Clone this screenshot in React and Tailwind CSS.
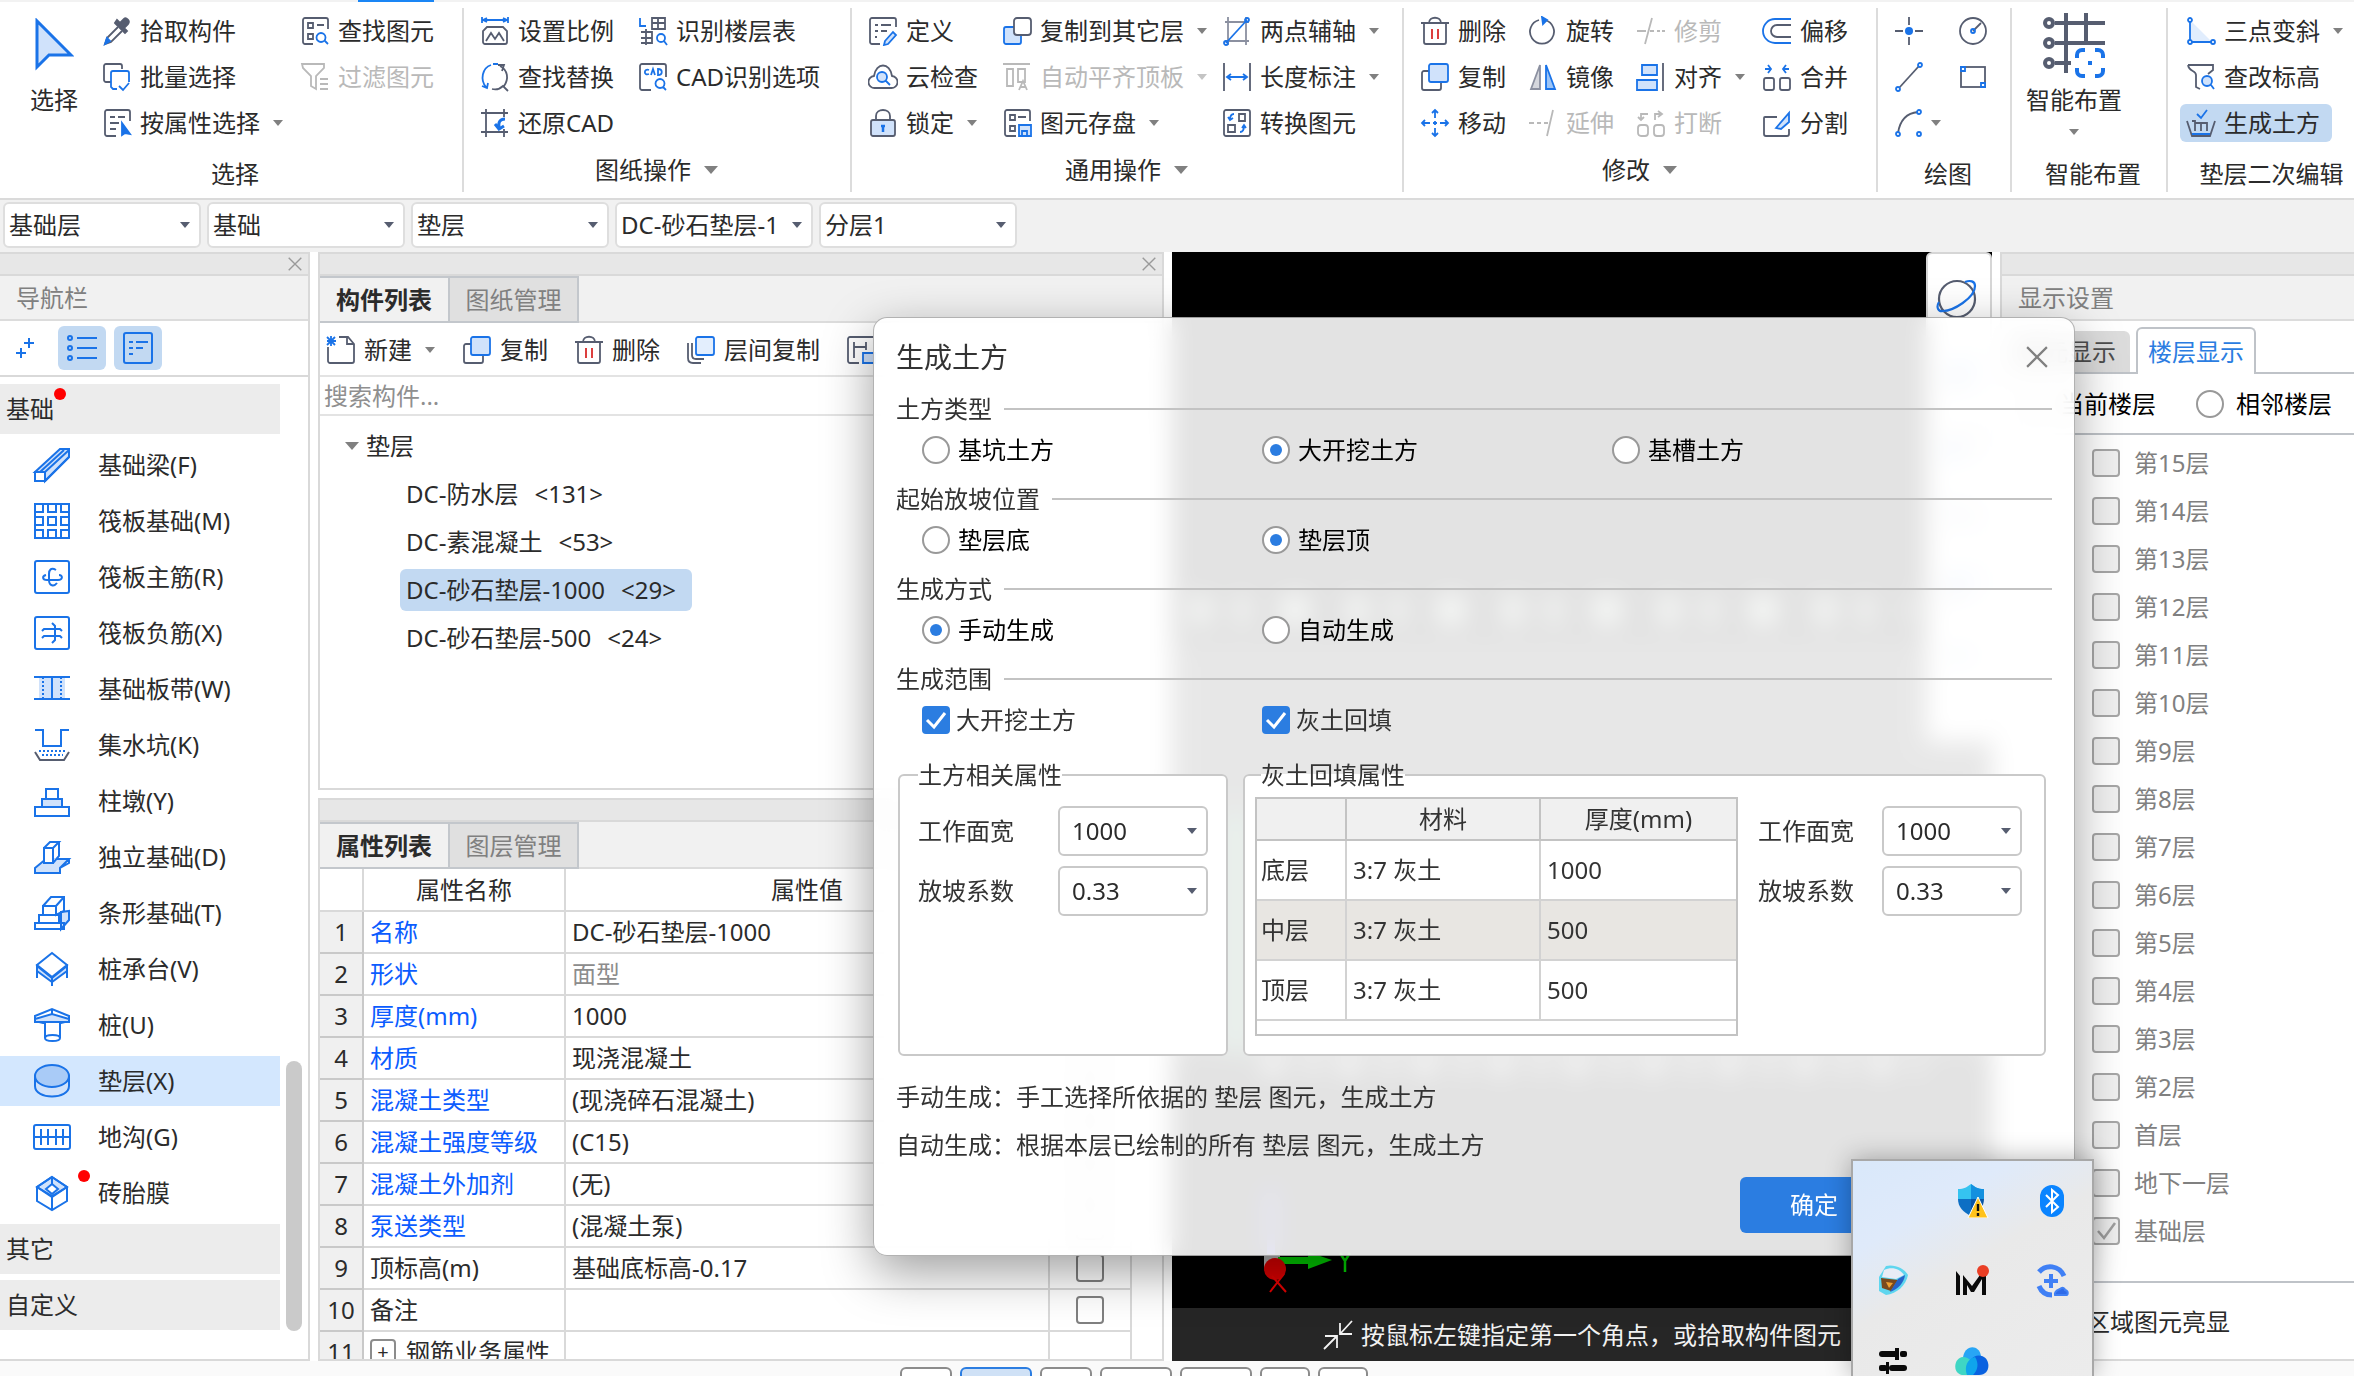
import { useState } from "react";
import clsx from "clsx";

const D = "#565d70";
const B = "#1a73e8";
const L = "#d0e2fb";
const G = "#b9b9b9";

/* ---------- ribbon icons, 30 x 30 ---------- */
const icons = {
  pick: (
    <>
      <path d="M16 11 5 22l-2 6 6-2 11-11" />
      <path d="M3 28l2-6 3 3z" fill={B} stroke={B} />
      <path d="M13 7l10 10 2-2-3-3 4-4c3-3-2-7-4-5l-4 4-3-3z" fill={D} />
    </>
  ),
  batch: (
    <>
      <path d="M9 20H4a2 2 0 0 1-2-2V4a2 2 0 0 1 2-2h14a2 2 0 0 1 2 2v3" />
      <path d="M15 27h-4l-2-2V11a2 2 0 0 1 2-2h14a2 2 0 0 1 2 2v9M17 24l4 4 6-7" stroke={B} />
    </>
  ),
  attr: (
    <>
      <path d="M14 28H5a2 2 0 0 1-2-2V4a2 2 0 0 1 2-2h21a2 2 0 0 1 2 2v9M8 9h5M16 9h7M8 15h9M8 21h6" />
      <path d="M20 15v12l3-2 5 1z" fill={B} stroke={B} />
    </>
  ),
  findEl: (
    <>
      <path d="M13 28H5a2 2 0 0 1-2-2V4a2 2 0 0 1 2-2h21a2 2 0 0 1 2 2v9M17 9h7" />
      <path d="M8 7h5v5H8zM8 18h5v5H8z" />
      <path d="M21 17a4 4 0 1 0 0 9 4 4 0 0 0 0-9zM25 25l3 3" stroke={B} />
    </>
  ),
  filter: <path d="M2 2h22v4l-8 8v13l-5-3V14L3 6zM20 17h8M20 22h8M20 27h8" stroke={G} />,
  scale: (
    <>
      <path d="M2 1v6M28 1v6M2 4h26M7 2 3 4l4 2M23 2l4 2-4 2" stroke={B} />
      <path d="M7 11h16l4 4v11a2 2 0 0 1-2 2H5a2 2 0 0 1-2-2V15zM6 25l5-8 4 6 4-6 5 8" />
    </>
  ),
  replace: (
    <>
      <path d="M11 3C2 6 0 18 6 25M2 24l5 2 1-5M13 2h5" stroke={B} />
      <path d="M20 4c8 4 9 13 4 20M18 3l6 0-2 6M12 27c4 1 8 0 11-3l5 5" />
    </>
  ),
  restore: (
    <>
      <path d="M1 5h27M1 24h27M6 1v28M24 1v8M24 21v8" />
      <path d="M25 11c-5 0-7 3-6 9M15 16l4 5 5-3" stroke={B} strokeWidth="3" />
    </>
  ),
  floors: (
    <>
      <path d="M14 2h13v11H14zM14 7h13M20 2v11M3 16h11v11H3M8 13v16M3 22h11" />
      <path d="M2 2v8h6M23 18a4 4 0 1 0 0 8 4 4 0 0 0 0-8zM26 25l3 4" stroke={B} />
    </>
  ),
  cadId: (
    <>
      <path d="M13 28H4a2 2 0 0 1-2-2V4a2 2 0 0 1 2-2h22a2 2 0 0 1 2 2v11" />
      <path d="M11 8c-5-2-6 6 0 4M13 13l2-6 2 6M20 7v6c5 0 5-6 0-6zM22 17a4 4 0 1 0 0 9 4 4 0 0 0 0-9zM25 25l3 3" stroke={B} />
    </>
  ),
  define: (
    <>
      <path d="M12 28H4a2 2 0 0 1-2-2V4a2 2 0 0 1 2-2h22a2 2 0 0 1 2 2v7M7 9h3M13 9h10M7 15h3M13 15h6M7 21h2" />
      <path d="M17 25l8-9 3 3-8 9-4 1z" stroke={B} fill={L} />
    </>
  ),
  cloud: (
    <>
      <path d="M7 26a6 6 0 0 1-1-12C8 0 22 0 24 14a6 6 0 0 1-1 12z" />
      <path d="M14 10a5 5 0 1 0 0 10 5 5 0 0 0 0-10zM18 19l4 4" stroke={B} fill={L} />
    </>
  ),
  lock: (
    <>
      <path d="M8 12V8c0-8 14-8 14 0v4" />
      <rect x="3" y="12" width="24" height="16" rx="2" fill={L} />
      <path d="M15 18v6M13 18h4" stroke={B} strokeWidth="2.5" />
    </>
  ),
  copyTo: (
    <>
      <rect x="2" y="11" width="17" height="17" rx="2" fill={L} stroke={B} />
      <rect x="12" y="2" width="17" height="17" rx="3" fill="#fff" />
    </>
  ),
  align: <path d="M1 2h27M5 7h6v17H5zM16 7h7v13h-7zM17 28l4-9 4 9M18 25h6" stroke={G} />,
  save: (
    <>
      <path d="M14 28H5a2 2 0 0 1-2-2V4a2 2 0 0 1 2-2h21a2 2 0 0 1 2 2v9M16 9h8M8 7h5v5H8zM8 18h5v5H8z" />
      <path d="M17 17h12v11H17zM20 28v-5h5v5" stroke={B} fill={L} />
    </>
  ),
  axis: (
    <>
      <path d="M3 6h24M3 25h24M6 1v28M24 1v28" stroke="#8b90a0" />
      <path d="M4 27 25 4" stroke={B} />
      <circle cx="25" cy="4" r="2" stroke={B} />
      <circle cx="4" cy="27" r="2" stroke={B} />
    </>
  ),
  dim: (
    <>
      <path d="M2 1v28M28 1v28" />
      <path d="M5 15h20M9 12l-4 3 4 3M21 12l4 3-4 3" stroke={B} />
    </>
  ),
  convert: (
    <>
      <rect x="2" y="2" width="26" height="26" rx="2" />
      <path d="M17 6h6v7h-6zM6 17h7v7H6z" />
      <path d="M12 6c-3 0-4 2-4 6M6 9l2 3 3-2M18 24c3 0 4-2 4-6M20 20l2-3 2 3" stroke={B} />
    </>
  ),
  trash: (
    <>
      <path d="M1 7h28M9 7c0-7 12-7 12 0M4 7v19a2 2 0 0 0 2 2h18a2 2 0 0 0 2-2V7" />
      <path d="M12 13v10M18 13v10" stroke="#d92b2b" />
    </>
  ),
  copy: (
    <>
      <path d="M9 9H4a2 2 0 0 0-2 2v15a2 2 0 0 0 2 2h15a2 2 0 0 0 2-2v-5" />
      <rect x="9" y="2" width="19" height="18" rx="2" fill={L} stroke={B} />
    </>
  ),
  move: (
    <path
      d="M15 10V2M12 5l3-3 3 3M15 20v8M12 25l3 3 3-3M10 15H2M5 12l-3 3 3 3M20 15h8M25 12l3 3-3 3M13 15h4M15 13v4"
      stroke={B}
    />
  ),
  rotate: (
    <>
      <path d="M17 4a12 12 0 1 1-6 0" />
      <path d="M14 1l5 3-4 4z" fill={B} stroke={B} />
    </>
  ),
  mirror: (
    <>
      <path d="M12 3v24H3z" fill="#d5d7dd" stroke="#8b90a0" />
      <path d="M18 3v24h9z" fill="#9cc4f6" stroke={B} />
    </>
  ),
  extend: <path d="M1 15h5M9 15h4M16 15h4M19 28 25 2" stroke={G} />,
  trim: <path d="M1 15h9M9 28 16 2M14 15h4M21 15h3M26 15h3" stroke={G} />,
  justify: (
    <>
      <path d="M6 3h15v10H6zM1 18h20v10H1z" stroke={B} fill={L} />
      <path d="M27 1v28" />
    </>
  ),
  breakIt: (
    <>
      <rect x="2" y="17" width="10" height="11" rx="3" stroke={G} />
      <rect x="18" y="17" width="10" height="11" rx="3" stroke={G} />
      <path d="M12 6H5v6M2 9l3 3 3-3M19 12V6h6M22 3l4 3-4 3" stroke={G} />
    </>
  ),
  offset: (
    <>
      <path d="M29 3H13a12 12 0 0 0 0 24h16" stroke={B} />
      <path d="M29 9H15a6 6 0 0 0 0 12h14" />
    </>
  ),
  merge: (
    <>
      <rect x="2" y="16" width="10" height="12" rx="2" />
      <rect x="18" y="16" width="10" height="12" rx="2" />
      <path d="M3 7h6M6 3l3 4-3 4M27 7h-6M24 3l-3 4 3 4" stroke={B} />
    </>
  ),
  split: (
    <>
      <path d="M15 9H3a1 1 0 0 0-1 1v16a2 2 0 0 0 2 2h21a2 2 0 0 0 2-2v-5" />
      <path d="M14 20 27 5v9l-8 7z" stroke={B} fill={L} />
    </>
  ),
  point: (
    <>
      <path d="M15 1v8M15 21v8M1 15h8M21 15h8" />
      <circle cx="15" cy="15" r="4" fill={B} stroke="none" />
    </>
  ),
  circle: (
    <>
      <circle cx="15" cy="15" r="13" />
      <path d="M15 15l8-8" />
      <circle cx="15" cy="15" r="2" stroke={B} />
    </>
  ),
  line: (
    <>
      <path d="M5 26 25 4" />
      <circle cx="4" cy="27" r="2" stroke={B} />
      <circle cx="26" cy="3" r="2" stroke={B} />
    </>
  ),
  rect: (
    <>
      <rect x="3" y="5" width="24" height="20" />
      <path d="M3 5h4v4H3zM23 21h4v4h-4z" fill="#fff" stroke={B} />
    </>
  ),
  arc: (
    <>
      <path d="M4 25C6 12 13 5 24 4" />
      <circle cx="4" cy="26" r="2" stroke={B} />
      <circle cx="25" cy="4" r="2" stroke={B} />
      <circle cx="25" cy="26" r="2" stroke={B} />
    </>
  ),
  slope: (
    <>
      <path d="M4 4v22h22z" fill="#e1edfd" stroke="none" />
      <path d="M4 4v22h22" stroke={B} />
      <circle cx="4" cy="4" r="2" stroke={B} fill="#fff" />
      <circle cx="4" cy="26" r="2" stroke={B} fill="#fff" />
      <circle cx="27" cy="26" r="2" stroke={B} fill="#fff" />
    </>
  ),
  level: (
    <>
      <path d="M2 3h25v5l-5 4M2 3c1 7 8 5 8 10v12l4 2" />
      <path d="M21 14a5 5 0 1 0 0 10 5 5 0 0 0 0-10zM25 23l3 4" stroke={B} fill={L} />
    </>
  ),
  earth: (
    <>
      <path d="M1 13l5 15h18l5-15M6 13h3v9M9 23v-8h12v8M15 15v8" />
      <path d="M6 26h18M11 6l4 4 6-8" stroke={B} />
    </>
  ),
  create: (
    <>
      <path d="M13 2h9l6 7v17a2 2 0 0 1-2 2H4a2 2 0 0 1-2-2V12M21 2v7h7" />
      <path d="M1 2l8 8M9 2l-8 8M5 1v10M1 6h9" stroke={B} />
    </>
  ),
  layerCopy: (
    <>
      <path d="M2 8v15c0 3 2 5 5 5h8M6 8v12c0 3 1 4 4 4h8" />
      <rect x="10" y="2" width="18" height="18" rx="2" fill="#e3eefd" stroke={B} />
    </>
  ),
  store: (
    <>
      <path d="M13 28H4a2 2 0 0 1-2-2V4a2 2 0 0 1 2-2h24M8 7v16M8 12h12M20 7v8" />
      <path d="M17 18h12v10H17z" stroke={B} fill={L} />
    </>
  ),
};

function Icon({ name, className = "size-[30px]" }) {
  return (
    <svg viewBox="0 0 30 30" fill="none" stroke={D} strokeWidth="1.8" className={clsx("shrink-0", className)}>
      {icons[name]}
    </svg>
  );
}

/* ---------- component tree icons, 36 x 36 ---------- */
const navIcons = {
  beam: (
    <>
      <path d="M1 25 26 2h9v8L11 34V25z" fill={L} />
      <path d="M1 25h10v9H1zM11 25 35 3M6 25 30 3M11 34 35 10" />
    </>
  ),
  raft: (
    <path d="M1 1h34v34H1zM1 9h8V1M14 1v8h8V1M27 1v8h8M1 14h8v8H1M14 14h8v8h-8zM35 14h-8v8h8M1 27h8v8M14 35v-8h8v8M27 35v-8h8" />
  ),
  raftMain: (
    <>
      <rect x="1" y="2" width="34" height="32" rx="2" />
      <path d="M22 11c-5-3-7 0-7 4v6c0 6 5 7 8 3M12 16c-4 1-4 5 1 5h11c5 0 5-5 1-5" />
    </>
  ),
  raftNeg: (
    <>
      <rect x="1" y="2" width="34" height="32" rx="2" />
      <path d="M8 16l2-2h16l2 2M8 23l2-2h16l2 2M18 8l3 3v14l-3 3" />
    </>
  ),
  strip: (
    <>
      <path d="M5 6h26v22H5z" fill={L} stroke="none" />
      <path d="M0 6h36M0 28h36M18 6v22" />
      <path d="M9 6v22M27 6v22" strokeDasharray="2 2" />
    </>
  ),
  sump: (
    <>
      <path d="M1 3h8v16h18V3h8" />
      <path d="M5 24h27M8 28h21" strokeDasharray="2 2" />
      <path d="M1 25l5 8h24l5-8" stroke={D} />
    </>
  ),
  pier: (
    <>
      <path d="M8 16h20v8H8z" fill={L} />
      <path d="M12 6h12v10H12zM1 24h34v9H1z" />
    </>
  ),
  single: (
    <>
      <path d="M1 29 12 20h23l-9 9v5H1zM26 29l9-5v-4" fill={L} />
      <path d="M10 9h9v15h-9zM10 9l6-6h9l-6 6M25 3v14l-6 7" fill="#fff" />
    </>
  ),
  stripBase: (
    <>
      <path d="M27 17l8-1v9l-8 9z" fill={L} />
      <path d="M9 11h13v9H9zM5 20h20v8H5zM1 28h29v6H1zM9 11l8-9h13v14l-8 4V11l8-9" />
    </>
  ),
  cap: (
    <>
      <path d="M3 15l15 12 15-12v5L18 31 3 20z" fill={L} />
      <path d="M18 2 33 14 18 26 3 14zM3 14v13M33 14v13M18 26v9" />
    </>
  ),
  pile: (
    <>
      <path d="M1 9 18 2l17 7v5l-8 2H9l-8-2z" fill="#fff" />
      <path d="M1 12l17-5 17 5v3H1z" fill={L} />
      <path d="M11 15v16c0 4 15 4 15 0V15zM18 2v6M11 31c0-4 15-4 15 0" fill="#fff" />
    </>
  ),
  pad: (
    <>
      <path d="M1 12v11c0 14 34 14 34 0V12" fill={L} />
      <ellipse cx="18" cy="13" rx="17" ry="11" fill="#a9cbf7" />
    </>
  ),
  trench: (
    <>
      <rect x="0" y="6" width="36" height="24" rx="2" />
      <path d="M0 18h36M7 10v16M14 10v16M22 10v16M29 10v16" />
    </>
  ),
  mold: (
    <>
      <path d="M18 2 33 12 18 22 3 12z" fill={L} />
      <path d="M18 2 33 12v14L18 35 3 26V12zM18 2v7M3 12l15 9 15-9M18 21v14" />
      <path d="M18 9l6 5-6 5-6-5z" fill="#fff" />
    </>
  ),
};

function Caret({ className = "text-[#808080]" }) {
  return (
    <svg viewBox="0 0 12 8" className={clsx("h-2 w-3 shrink-0", className)} fill="currentColor">
      <path d="M1 1h10L6 7z" />
    </svg>
  );
}

function BigCaret() {
  return (
    <svg viewBox="0 0 16 10" className="h-2.5 w-4 shrink-0 text-[#808080]" fill="currentColor">
      <path d="M1 1h14L8 9z" />
    </svg>
  );
}

function Close({ className }) {
  return (
    <svg viewBox="0 0 20 20" fill="none" stroke="currentColor" strokeWidth="2" className={className}>
      <path d="M1 1l18 18M19 1 1 19" />
    </svg>
  );
}

function Tool({ icon, label, caret, disabled, active }) {
  return (
    <button
      disabled={disabled}
      className={clsx(
        "flex h-[38px] items-center gap-2 whitespace-nowrap",
        active && "-ml-1.5 w-[152px] rounded-md bg-[#c2d9f2] pl-1.5",
        disabled ? "text-[#b9b9b9]" : "text-[#2b2b2b]"
      )}
    >
      <Icon name={icon} />
      <span>{label}</span>
      {caret && <Caret className={clsx("ml-1", disabled ? "text-[#c4c4c4]" : "text-[#808080]")} />}
    </button>
  );
}

function Column({ className, children }) {
  return <div className={clsx("flex flex-col items-start gap-2", className)}>{children}</div>;
}

function Group({ title, caret, pad, className, children }) {
  return (
    <section className={clsx("my-1.5 flex flex-col border-[#dcdcdc]", className)}>
      <div className={clsx("flex h-[140px] pt-1", pad && "pl-4")}>{children}</div>
      <h2
        className={clsx(
          "flex items-center justify-center gap-3 leading-6",
          caret ? "mt-2.5" : "mt-3.5 pl-2"
        )}
      >
        {title}
        {caret && <BigCaret />}
      </h2>
    </section>
  );
}

function Ribbon() {
  return (
    <header className="flex h-[200px] shrink-0 overflow-hidden border-t-2 border-b-2 border-t-[#f2f2f2] border-b-[#dadada] bg-white">
      <Group title="选择" className="w-[464px] shrink-0 border-r-2">
        <button className="flex w-[102px] flex-col items-center gap-3.5 pt-1.5 pl-1.5">
          <svg viewBox="0 0 40 54" className="h-[54px] w-10" fill={L} stroke={B} strokeWidth="3">
            <path d="M3 3v46l12-12h22z" />
          </svg>
          <span className="leading-7">选择</span>
        </button>
        <Column className="w-[198px]">
          <Tool icon="pick" label="拾取构件" />
          <Tool icon="batch" label="批量选择" />
          <Tool icon="attr" label="按属性选择" caret />
        </Column>
        <Column>
          <Tool icon="findEl" label="查找图元" />
          <Tool icon="filter" label="过滤图元" disabled />
        </Column>
      </Group>

      <Group title="图纸操作" caret pad className="w-[388px] shrink-0 border-r-2">
        <Column className="w-[158px]">
          <Tool icon="scale" label="设置比例" />
          <Tool icon="replace" label="查找替换" />
          <Tool icon="restore" label="还原CAD" />
        </Column>
        <Column>
          <Tool icon="floors" label="识别楼层表" />
          <Tool icon="cadId" label="CAD识别选项" />
        </Column>
      </Group>

      <Group title="通用操作" caret pad className="w-[552px] shrink-0 border-r-2">
        <Column className="w-[134px]">
          <Tool icon="define" label="定义" />
          <Tool icon="cloud" label="云检查" />
          <Tool icon="lock" label="锁定" caret />
        </Column>
        <Column className="w-[220px]">
          <Tool icon="copyTo" label="复制到其它层" caret />
          <Tool icon="align" label="自动平齐顶板" caret disabled />
          <Tool icon="save" label="图元存盘" caret />
        </Column>
        <Column>
          <Tool icon="axis" label="两点辅轴" caret />
          <Tool icon="dim" label="长度标注" caret />
          <Tool icon="convert" label="转换图元" />
        </Column>
      </Group>

      <Group title="修改" caret pad className="w-[474px] shrink-0 border-r-2">
        <Column className="w-[108px]">
          <Tool icon="trash" label="删除" />
          <Tool icon="copy" label="复制" />
          <Tool icon="move" label="移动" />
        </Column>
        <Column className="w-[108px]">
          <Tool icon="rotate" label="旋转" />
          <Tool icon="mirror" label="镜像" />
          <Tool icon="extend" label="延伸" disabled />
        </Column>
        <Column className="w-[126px]">
          <Tool icon="trim" label="修剪" disabled />
          <Tool icon="justify" label="对齐" caret />
          <Tool icon="breakIt" label="打断" disabled />
        </Column>
        <Column>
          <Tool icon="offset" label="偏移" />
          <Tool icon="merge" label="合并" />
          <Tool icon="split" label="分割" />
        </Column>
      </Group>

      <Group title="绘图" pad className="w-[134px] shrink-0 border-r-2">
        <div className="grid grid-cols-[30px_30px] content-start gap-x-[34px] gap-y-2">
          {["point", "circle", "line", "rect"].map((name) => (
            <button key={name} aria-label={name} className="flex h-[38px] items-center">
              <Icon name={name} />
            </button>
          ))}
          <button aria-label="arc" className="flex h-[38px] items-center gap-1.5">
            <Icon name="arc" />
            <Caret />
          </button>
        </div>
      </Group>

      <Group title="智能布置" className="w-[156px] shrink-0 border-r-2">
        <button className="flex w-[124px] flex-col items-center">
          <svg viewBox="0 0 62 66" className="h-[66px] w-[62px]" fill="none" stroke={D} strokeWidth="4">
            <path d="M12 11h50M12 31h50M12 51h16M23 1v60M43 1v30" />
            <circle cx="6" cy="11" r="4" />
            <circle cx="6" cy="31" r="4" />
            <circle cx="6" cy="51" r="4" />
            <path
              d="M34 46v-3a5 5 0 0 1 5-5h3M52 38h3a5 5 0 0 1 5 5v3M60 56v3a5 5 0 0 1-5 5h-3M42 64h-3a5 5 0 0 1-5-5v-3"
              stroke={B}
            />
            <path d="M45 51h4" stroke={B} />
          </svg>
          <span className="mt-1.5 leading-8 whitespace-nowrap">智能布置</span>
          <Caret className="mt-3 text-[#808080]" />
        </button>
      </Group>

      <Group title="垫层二次编辑" className="min-w-[187px] flex-1 pl-3 whitespace-nowrap">
        <Column className="pl-1.5">
          <Tool icon="slope" label="三点变斜" caret />
          <Tool icon="level" label="查改标高" />
          <Tool icon="earth" label="生成土方" active />
        </Column>
      </Group>
    </header>
  );
}

function Selectors() {
  const values = ["基础层", "基础", "垫层", "DC-砂石垫层-1", "分层1"];
  return (
    <div className="flex h-[52px] shrink-0 gap-1.5 bg-[#f1f1f1] pt-0.5 pl-[3px]">
      {values.map((v) => (
        <div key={v} className="relative h-[46px] w-[198px]">
          <select
            aria-label={v}
            className="h-full w-full appearance-none rounded-md border-2 border-[#dedede] bg-white pl-1 text-[#2b2b2b] outline-none"
          >
            <option>{v}</option>
          </select>
          <Caret className="pointer-events-none absolute top-[19px] right-2.5 text-[#565d70]" />
        </div>
      ))}
    </div>
  );
}

function PanelBar({ closable }) {
  return (
    <div className="flex h-6 shrink-0 items-center justify-end border-y-2 border-[#d9d9d9] bg-[#e7e7e7] pr-1.5">
      {closable && (
        <button aria-label="关闭" className="text-[#9a9a9a]">
          <Close className="size-3.5" />
        </button>
      )}
    </div>
  );
}

const components = [
  ["beam", "基础梁(F)"],
  ["raft", "筏板基础(M)"],
  ["raftMain", "筏板主筋(R)"],
  ["raftNeg", "筏板负筋(X)"],
  ["strip", "基础板带(W)"],
  ["sump", "集水坑(K)"],
  ["pier", "柱墩(Y)"],
  ["single", "独立基础(D)"],
  ["stripBase", "条形基础(T)"],
  ["cap", "桩承台(V)"],
  ["pile", "桩(U)"],
  ["pad", "垫层(X)"],
  ["trench", "地沟(G)"],
  ["mold", "砖胎膜"],
];

function NavPanel() {
  return (
    <aside className="flex w-[310px] shrink-0 flex-col border-r-2 border-b-2 border-[#d9d9d9]">
      <PanelBar closable />
      <h2 className="flex h-[45px] shrink-0 items-center border-b-2 border-[#dcdcdc] bg-[#f1f1f1] pl-4 text-[#808080]">
        导航栏
      </h2>
      <div className="flex h-14 shrink-0 items-center gap-2 border-b-2 border-[#d9d9d9] pl-3.5">
        <button aria-label="展开" className="mr-3.5">
          <svg viewBox="0 0 22 22" className="size-[22px]" fill="none" stroke={B} strokeWidth="2">
            <path d="M2 16h10M7 11v10M10 6h10M15 1v10" />
          </svg>
        </button>
        <button aria-label="列表" className="grid h-11 w-12 place-items-center rounded-md bg-[#c2d9f2]">
          <svg viewBox="0 0 32 30" className="h-[30px] w-8" fill="none" stroke={B} strokeWidth="2">
            <path d="M11 5h20M11 15h20M11 25h20" />
            <circle cx="4" cy="5" r="2" />
            <circle cx="4" cy="15" r="2" />
            <circle cx="4" cy="25" r="2" />
          </svg>
        </button>
        <button aria-label="详情" className="grid h-11 w-12 place-items-center rounded-md bg-[#c2d9f2]">
          <svg viewBox="0 0 32 32" className="size-8" fill="none" stroke={B} strokeWidth="2">
            <rect x="2" y="1" width="28" height="30" rx="2" />
            <path d="M7 10h4M14 10h12M7 16h4M14 16h7M7 22h4" />
          </svg>
        </button>
      </div>
      <div className="flex min-h-0 flex-1 justify-between pt-[7px] pr-1.5">
        <ul className="flex w-[280px] flex-col gap-1.5">
          <li className="relative flex h-[50px] items-center bg-[#ececec] pl-1.5">
            基础
            <span className="absolute top-1 left-[54px] size-3 rounded-full bg-[#f00]" />
          </li>
          {components.map(([icon, label]) => (
            <li key={label} className="relative">
              <button
                className={clsx(
                  "flex h-[50px] w-full items-center gap-7 pl-[34px]",
                  icon === "pad" && "bg-[#d3e7fe]"
                )}
              >
                <svg viewBox="0 0 36 36" className="size-9 overflow-visible" fill="none" stroke={B} strokeWidth="2">
                  {navIcons[icon]}
                </svg>
                {label}
              </button>
              {icon === "mold" && <span className="absolute top-0.5 left-[78px] size-3 rounded-full bg-[#f00]" />}
            </li>
          ))}
          <li className="flex h-[50px] items-center bg-[#ececec] pl-1.5">其它</li>
          <li className="flex h-[50px] items-center bg-[#ececec] pl-1.5">自定义</li>
        </ul>
        <div className="mb-7 h-[270px] w-4 self-end rounded-full bg-[#cacaca]" />
      </div>
    </aside>
  );
}

function Tabs({ items }) {
  return (
    <div className="flex h-[47px] shrink-0 border-b-2 border-[#dcdcdc] bg-[#f1f1f1]">
      {items.map((t, i) => (
        <button
          key={t}
          className={clsx(
            "-mb-0.5 border-2 border-[#c3c7cc]",
            i === 0
              ? "w-[130px] border-l-0 bg-[#f1f1f1] font-bold text-[#2b2b2b]"
              : "-ml-0.5 w-[131px] bg-[#e0e0e0] text-[#808080]"
          )}
        >
          {t}
        </button>
      ))}
    </div>
  );
}

function ComponentList() {
  const rows = [
    ["DC-防水层", 131],
    ["DC-素混凝土", 53],
    ["DC-砂石垫层-1000", 29],
    ["DC-砂石垫层-500", 24],
  ];
  return (
    <section className="flex h-[538px] shrink-0 flex-col border-r-2 border-b-2 border-l-2 border-[#d9d9d9]">
      <PanelBar closable />
      <Tabs items={["构件列表", "图纸管理"]} />
      <div className="flex h-[54px] shrink-0 items-center gap-[26px] overflow-hidden border-b-2 border-[#e3e3e3] pt-0.5 pl-1.5">
        <Tool icon="create" label="新建" caret />
        <Tool icon="copy" label="复制" />
        <Tool icon="trash" label="删除" />
        <Tool icon="layerCopy" label="层间复制" />
        <button aria-label="构件存盘">
          <Icon name="store" />
        </button>
      </div>
      <input
        aria-label="搜索构件"
        placeholder="搜索构件..."
        className="h-[39px] shrink-0 border-b-2 border-[#e3e3e3] pl-1 outline-none placeholder:text-[#8f8f8f]"
      />
      <ul className="flex flex-col pt-1.5">
        <li className="flex h-12 items-center gap-1.5 pl-6">
          <BigCaret />
          垫层
        </li>
        {rows.map(([name, count], i) => (
          <li key={name} className="flex h-12 items-center pl-20">
            <button
              className={clsx(
                "flex h-[42px] items-center gap-4 rounded-md pr-4 pl-1.5 whitespace-nowrap",
                i === 2 && "bg-[#c2d9f2]"
              )}
            >
              <span>{name}</span>
              <span>{`<${count}>`}</span>
            </button>
          </li>
        ))}
      </ul>
    </section>
  );
}

const props = [
  ["名称", "DC-砂石垫层-1000", true],
  ["形状", "面型", true],
  ["厚度(mm)", "1000", true],
  ["材质", "现浇混凝土", true],
  ["混凝土类型", "(现浇碎石混凝土)", true],
  ["混凝土强度等级", "(C15)", true],
  ["混凝土外加剂", "(无)", true],
  ["泵送类型", "(混凝土泵)", true],
  ["顶标高(m)", "基础底标高-0.17", false],
  ["备注", "", false],
  ["钢筋业务属性", "", false],
];

function PropertyList() {
  return (
    <section className="mt-2 flex min-h-0 flex-1 flex-col overflow-hidden border-r-2 border-b-2 border-l-2 border-[#d9d9d9]">
      <PanelBar />
      <Tabs items={["属性列表", "图层管理"]} />
      <table className="w-[812px] table-fixed border-collapse">
        <colgroup>
          <col className="w-[43px]" />
          <col className="w-[202px]" />
          <col />
          <col className="w-[82px]" />
        </colgroup>
        <thead>
          <tr className="h-[42px]">
            {["", "属性名称", "属性值", "附加"].map((h) => (
              <th key={h} className="border-r-2 border-b-2 border-[#d9d9d9] p-0 font-normal">
                {h}
              </th>
            ))}
          </tr>
        </thead>
        <tbody>
          {props.map(([name, value, blue], i) => (
            <tr key={name} className="h-[42px]">
              <td className="border-r-2 border-b-2 border-[#c9c9c9] bg-[#f0f0f0] p-0 text-center">{i + 1}</td>
              <td
                className={clsx(
                  "border-r-2 border-b-2 border-[#d9d9d9] p-0 pl-1.5 whitespace-nowrap",
                  blue && "text-[#0b5cff]"
                )}
              >
                {i === 10 ? (
                  <span className="flex items-center gap-2.5">
                    <button className="grid size-[26px] place-items-center rounded border-2 border-[#8c8c8c] text-xl leading-none">
                      +
                    </button>
                    {name}
                  </span>
                ) : (
                  name
                )}
              </td>
              <td
                className={clsx(
                  "border-r-2 border-b-2 border-[#d9d9d9] p-0 pl-1.5",
                  value === "面型" && "text-[#8c8c8c]"
                )}
              >
                {value}
              </td>
              <td className="border-r-2 border-b-2 border-[#d9d9d9] p-0">
                {i > 0 && i < 10 && (
                  <input
                    type="checkbox"
                    aria-label={name}
                    className="mx-auto block size-7 appearance-none rounded border-2 border-[#808080] bg-white"
                  />
                )}
              </td>
            </tr>
          ))}
        </tbody>
      </table>
    </section>
  );
}

function Viewport() {
  return (
    <main className="relative mx-2 flex min-w-0 flex-1 flex-col bg-black">
      <div className="relative flex-1 overflow-hidden">
        {/* dimmed model lines in the canvas */}
        <svg className="absolute inset-0 size-full" fill="none">
          <rect y="390" width="100%" height="415" fill="#2c2c2c" />
          <path d="M20 358h720" stroke="#c2d2c2" strokeWidth="28" strokeDasharray="18 26 12 34 26 40" />
          <path d="M90 812h660" stroke="#999" strokeWidth="24" strokeDasharray="22 22 12 20" />
          <path d="M64 560v240" stroke="#3fae70" strokeWidth="16" />
        </svg>
        <svg viewBox="0 0 110 130" className="absolute bottom-0 left-[80px] h-[130px] w-[110px]">
          <path d="M19 10v66" stroke="#3434ff" strokeWidth="8" />
          <path d="M12 77h16v14H12z" fill="#b5b5b5" />
          <path d="M26 79h30v-5l24 8-24 9v-5H26z" fill="#00c800" />
          <circle cx="23" cy="91" r="11" fill="#d60000" />
          <path d="M18 114 32 96M20 98l14 16" stroke="#e00000" strokeWidth="2" />
          <path d="M88 75l5 8 5-8M93 83v11" stroke="#00d000" strokeWidth="2.5" fill="none" />
        </svg>
      </div>
      <div className="flex h-[53px] shrink-0 items-center justify-center gap-2 bg-[#262626] text-[#f2f2f2]">
        <svg viewBox="0 0 30 30" className="size-[30px]" fill="none" stroke="currentColor" strokeWidth="1.8">
          <path d="M29 1 17 14M17 3v11h12M1 29l13-13M2 16h12v12" />
        </svg>
        <p className="whitespace-nowrap">按鼠标左键指定第一个角点，或拾取构件图元</p>
      </div>
      {/* view tools floating on the canvas */}
      <div className="absolute top-0 right-0 flex h-[490px] w-[66px] flex-col items-center gap-10 rounded-t-md border-2 border-[#d6d6d6] bg-white pt-6">
        <button aria-label="旋转视图" className="mr-1">
          <svg viewBox="0 0 42 42" className="size-[42px]" fill="none" strokeWidth="2.2">
            <circle cx="21" cy="21" r="18" stroke={D} />
            <path d="M3 24c-3 5-1 10 4 9C17 33 39 20 39 8c0-5-5-6-10-4" stroke={B} />
          </svg>
        </button>
        <Icon name="copy" />
        <Icon name="copyTo" />
        <Icon name="rect" />
        <Icon name="layerCopy" />
        <Icon name="point" />
      </div>
    </main>
  );
}

const floors = [
  ...Array.from({ length: 14 }, (_, i) => `第${15 - i}层`),
  "首层",
  "地下一层",
  "基础层",
];

function DisplayPanel() {
  return (
    <aside className="flex w-[354px] shrink-0 flex-col border-b-2 border-l-2 border-[#d9d9d9]">
      <PanelBar />
      <h2 className="flex h-[45px] shrink-0 items-center border-b-2 border-[#dcdcdc] bg-[#f1f1f1] pl-4 text-[#808080]">
        显示设置
      </h2>
      <div className="flex h-[53px] shrink-0 items-end border-b-2 border-[#bfc3c8] pl-1">
        <button className="mr-1.5 h-[41px] w-[124px] rounded-t-md bg-[#dcdcdc] text-[#4d4d4d]">图元显示</button>
        <button className="-mb-0.5 h-[47px] w-[120px] rounded-t-md border-2 border-b-0 border-[#bfc3c8] bg-white text-[#2b7de1]">
          楼层显示
        </button>
      </div>
      <div className="flex h-[61px] shrink-0 items-center gap-10 border-b-2 border-[#bfc3c8] pl-[18px] text-black">
        <Radio name="floor" label="当前楼层" gap="gap-3" />
        <Radio name="floor" label="相邻楼层" gap="gap-3" />
      </div>
      <ul className="flex flex-1 flex-col pt-1 pl-[90px]">
        {floors.map((f) => (
          <li key={f} className="h-12">
            <label className="flex h-full items-center gap-3.5 text-[#808080]">
              <span className="relative grid size-7 place-items-center">
                <input
                  type="checkbox"
                  disabled
                  defaultChecked={f === "基础层"}
                  className="peer size-7 appearance-none rounded border-2 border-[#a6a6a6] bg-[#f0f0f0]"
                />
                <svg
                  viewBox="0 0 28 28"
                  className="absolute hidden size-7 peer-checked:block"
                  fill="none"
                  stroke="#a0a0a0"
                  strokeWidth="2.5"
                >
                  <path d="M6 14l6 7L23 6" />
                </svg>
              </span>
              {f}
            </label>
          </li>
        ))}
      </ul>
      <label className="flex h-[78px] shrink-0 items-center gap-3 border-t-2 border-[#bfc3c8] pt-0.5 pl-11">
        <input type="checkbox" className="size-7 appearance-none rounded border-2 border-[#808080] bg-white" />
        区域图元亮显
      </label>
    </aside>
  );
}

function Radio({ name, label, checked, gap = "gap-2" }) {
  return (
    <label className={clsx("flex items-center whitespace-nowrap text-black", gap)}>
      <input
        type="radio"
        name={name}
        defaultChecked={checked}
        className="grid size-7 shrink-0 appearance-none place-content-center rounded-full border-2 border-[#999] bg-white before:size-3 before:rounded-full checked:before:bg-[#2b7de1]"
      />
      {label}
    </label>
  );
}

function CheckBox({ label }) {
  return (
    <label className="flex items-center gap-1.5 whitespace-nowrap">
      <span className="relative grid size-7 place-items-center">
        <input
          type="checkbox"
          defaultChecked
          className="peer size-7 appearance-none rounded border-2 border-[#999] bg-white checked:border-[#2b7de1] checked:bg-[#2b7de1]"
        />
        <svg
          viewBox="0 0 28 28"
          className="pointer-events-none absolute hidden size-7 peer-checked:block"
          fill="none"
          stroke="#fff"
          strokeWidth="3"
        >
          <path d="M5 14l7 7L23 7" />
        </svg>
      </span>
      {label}
    </label>
  );
}

function Section({ title, children }) {
  return (
    <section className="h-[90px]">
      <div className="flex h-[26px] items-center gap-3">
        <h3>{title}</h3>
        <div className="h-0.5 flex-1 bg-[#c3c3c3]" />
      </div>
      <div className="mt-3 grid h-7 grid-cols-[340px_350px_1fr] items-center pl-[26px]">{children}</div>
    </section>
  );
}

function Fields({ labelWidth, comboWidth }) {
  return (
    <div className="flex flex-col gap-2.5">
      {[
        ["工作面宽", "1000"],
        ["放坡系数", "0.33"],
      ].map(([label, value]) => (
        <label key={label} className="flex h-[50px] items-center">
          <span className={clsx("whitespace-nowrap", labelWidth)}>{label}</span>
          <span className={clsx("relative h-full", comboWidth)}>
            <select className="h-full w-full appearance-none rounded-md border-2 border-[#c9c9c9] bg-white pl-3 text-[#2b2b2b] outline-none">
              <option>{value}</option>
            </select>
            <Caret className="pointer-events-none absolute top-[21px] right-2.5 text-[#565d70]" />
          </span>
        </label>
      ))}
    </div>
  );
}

function EarthworkDialog({ onClose }) {
  const layers = [
    ["底层", "1000"],
    ["中层", "500"],
    ["顶层", "500"],
  ];
  return (
    <div
      role="dialog"
      aria-label="生成土方"
      className="absolute top-[317px] left-[873px] w-[1202px] rounded-[14px] border border-black/30 bg-white/[0.89] px-[22px] pb-[22px] text-[#333] shadow-[0_16px_50px_rgba(0,0,0,0.38)] backdrop-blur-md"
    >
      <div className="flex h-[78px] items-center justify-between">
        <h2 className="text-[28px]">生成土方</h2>
        <button aria-label="关闭" onClick={onClose} className="mr-1 text-[#808080]">
          <Close className="size-[22px]" />
        </button>
      </div>
      <Section title="土方类型">
        <Radio name="kind" label="基坑土方" />
        <Radio name="kind" label="大开挖土方" checked />
        <Radio name="kind" label="基槽土方" />
      </Section>
      <Section title="起始放坡位置">
        <Radio name="start" label="垫层底" />
        <Radio name="start" label="垫层顶" checked />
      </Section>
      <Section title="生成方式">
        <Radio name="mode" label="手动生成" checked />
        <Radio name="mode" label="自动生成" />
      </Section>
      <Section title="生成范围">
        <CheckBox label="大开挖土方" />
        <CheckBox label="灰土回填" />
      </Section>

      <div className="mt-[7px] mr-1.5 ml-0.5 flex h-[293px] gap-[15px]">
        <fieldset className="w-[329px] rounded-md border-2 border-[#c9c9c9] bg-white px-[18px]">
          <legend className="leading-6">土方相关属性</legend>
          <div className="pt-[19px]">
            <Fields labelWidth="w-[140px]" comboWidth="w-[150px]" />
          </div>
        </fieldset>
        <fieldset className="flex-1 rounded-md border-2 border-[#c9c9c9] bg-white px-2.5">
          <legend className="ml-1.5 leading-6">灰土回填属性</legend>
          <div className="flex gap-5 pt-2.5">
            <div className="h-[239px] w-[483px] border-2 border-[#c3c3c3]">
              <table className="w-full table-fixed border-collapse">
                <colgroup>
                  <col className="w-[89px]" />
                  <col className="w-[194px]" />
                  <col />
                </colgroup>
                <thead>
                  <tr className="h-[41px] bg-[#f0f0f0]">
                    {["", "材料", "厚度(mm)"].map((h) => (
                      <th key={h} className="border-r-2 border-b-2 border-[#c3c3c3] p-0 font-normal last:border-r-0">
                        {h}
                      </th>
                    ))}
                  </tr>
                </thead>
                <tbody>
                  {layers.map(([name, thick], i) => (
                    <tr key={name} className={clsx("h-[60px]", i === 1 && "bg-[#e8e6e2]")}>
                      <td className="border-r-2 border-b-2 border-[#d2d2d2] p-0 pl-1">{name}</td>
                      <td className="border-r-2 border-b-2 border-[#d2d2d2] p-0 pl-1.5">3:7 灰土</td>
                      <td className="border-b-2 border-[#d2d2d2] p-0 pl-1.5">{thick}</td>
                    </tr>
                  ))}
                </tbody>
              </table>
            </div>
            <div className="pt-[9px]">
              <Fields labelWidth="w-[124px]" comboWidth="w-[140px]" />
            </div>
          </div>
        </fieldset>
      </div>

      <div className="mt-[17px] leading-[48px]">
        <p>手动生成：手工选择所依据的 垫层 图元，生成土方</p>
        <p>自动生成：根据本层已绘制的所有 垫层 图元，生成土方</p>
      </div>
      <div className="mt-2 flex justify-end gap-4">
        <button className="h-14 w-[148px] rounded-md bg-[#2b7de1] text-white">确定</button>
        <button className="h-14 w-[148px] rounded-md border-2 border-[#c9c9c9] bg-white">取消</button>
      </div>
    </div>
  );
}

function Tray() {
  return (
    <div className="absolute bottom-0 left-[1851px] grid h-[217px] w-[243px] auto-rows-[80px] grid-cols-3 place-items-center overflow-hidden border-2 border-b-0 border-[#a8a8a8] bg-[linear-gradient(150deg,#d9e8fa_0%,#dfeafa_26%,#e9e9e9_48%,#ececec_100%)] shadow-[0_0_24px_rgba(0,0,0,0.3)]">
      <span />
      <button aria-label="安全中心">
        <svg viewBox="0 0 34 34" className="size-[34px]">
          <path d="M3 5c6 0 9-2 13-5 4 3 7 5 13 5v10H3z" fill="#35c3f0" />
          <path d="M16 0c4 3 7 5 13 5v10H16z" fill="#1490df" />
          <path d="M3 15h13v17C8 28 3 23 3 15z" fill="#0d6fc4" />
          <path d="M16 15h13c0 8-5 13-13 17z" fill="#0a55a5" />
          <path d="M23 13 33 34H13z" fill="#ffc21a" stroke="#fff" strokeWidth="1" />
          <path d="M23 20v7M23 29v3" stroke="#111" strokeWidth="2.4" />
        </svg>
      </button>
      <button aria-label="蓝牙">
        <svg viewBox="0 0 24 32" className="h-8 w-6">
          <rect width="24" height="32" rx="12" fill="#0a84ff" />
          <path d="M6 10l12 12-6 5V5l6 5L6 22" fill="none" stroke="#fff" strokeWidth="2" />
        </svg>
      </button>
      <button aria-label="头盔">
        <svg viewBox="0 0 34 32" className="h-8 w-[34px]">
          <path d="M3 12 10 1c8-2 18 2 22 9-2 10-11 19-22 20l-7-4z" fill="#5fd6ef" />
          <path d="M8 5c8-4 16-1 20 5l-8 4L6 12z" fill="#e9ecf6" />
          <path d="M5 13l17 2-7 11-9-3z" fill="#7b4a1d" />
          <path d="M10 17l7 1-4 5z" fill="#f0a232" />
          <path d="M29 10c-1 8-7 14-15 17l8-13z" fill="#2563c9" />
        </svg>
      </button>
      <button aria-label="消息">
        <svg viewBox="0 0 34 32" className="h-8 w-[34px]">
          <path d="M1 6l4 5v19H1zM8 10l9 11 8-11h6v20h-4V14l-8 13h-3l-4-7v10H8z" fill="#0a0a0a" />
          <circle cx="28" cy="6" r="6" fill="#ea3f25" />
        </svg>
      </button>
      <button aria-label="助手">
        <svg viewBox="0 0 34 34" className="size-[34px]" fill="none" stroke="#4080f5" strokeWidth="5">
          <path d="M4 8c7-8 20-7 25 4" />
          <path d="M4 22c2 5 6 9 13 9" />
          <path d="M16 10v14M9 17h14" strokeWidth="4" />
          <path d="M20 31c-1-4 3-5 5-6 3-3 5 0 5 1 4 1 3 5 1 5z" fill="#2f6be8" strokeWidth="2" />
        </svg>
      </button>
      <button aria-label="开关">
        <svg viewBox="0 0 28 28" className="size-7" fill="#0a0a0a">
          <rect y="4" width="20" height="6" rx="3" />
          <path d="M16 1h4v12h-4z" />
          <rect x="21" y="4" width="7" height="6" rx="2" />
          <rect x="10" y="18" width="18" height="6" rx="3" />
          <path d="M7 15h3v12H7z" />
          <rect y="18" width="8" height="6" rx="2" />
        </svg>
      </button>
      <button aria-label="云盘">
        <svg viewBox="0 0 34 28" className="h-7 w-[34px]">
          <path d="M8 12C8-2 24-4 26 9v17H10z" fill="#28a5f5" />
          <path d="M14 28C10 16 18 6 27 9c9 3 9 19-3 19z" fill="#0a62e0" />
          <path d="M9 28C-3 28-2 11 8 10c8 0 12 8 10 18z" fill="#3fd6c4" />
          <path d="M12 28c-3-8 0-16 8-18 4 6 3 13-2 18z" fill="#0fa4ec" />
        </svg>
      </button>
    </div>
  );
}

function StatusBar() {
  return (
    <footer className="flex h-[15px] shrink-0 items-start gap-2 overflow-hidden bg-[#fafafa] pt-1.5 pl-[900px]">
      {["w-[52px]", "w-[72px]", "w-[52px]", "w-[72px]", "w-[72px]", "w-[50px]", "w-[50px]"].map((w, i) => (
        <button
          key={i}
          aria-label={`捕捉 ${i + 1}`}
          className={clsx(
            "h-8 shrink-0 rounded-md border-2",
            w,
            i === 1 ? "border-[#2b7de1] bg-[#cfe1f6]" : "border-[#8c8c8c] bg-white"
          )}
        />
      ))}
    </footer>
  );
}

export default function App() {
  const [open, setOpen] = useState(true);

  return (
    <div className="relative flex h-screen flex-col overflow-hidden bg-white font-['Noto_Sans','Noto_Sans_CJK_SC',sans-serif] text-[24px] leading-8 text-[#2b2b2b]">
      <div className="absolute top-0 left-[358px] h-0.5 w-[76px] bg-[#1a86f5]" />
      <Ribbon />
      <Selectors />
      <div className="flex min-h-0 flex-1">
        <NavPanel />
        <div className="ml-2 flex w-[846px] shrink-0 flex-col">
          <ComponentList />
          <PropertyList />
        </div>
        <Viewport />
        <DisplayPanel />
      </div>
      <StatusBar />
      {open && <EarthworkDialog onClose={() => setOpen(false)} />}
      <Tray />
    </div>
  );
}
